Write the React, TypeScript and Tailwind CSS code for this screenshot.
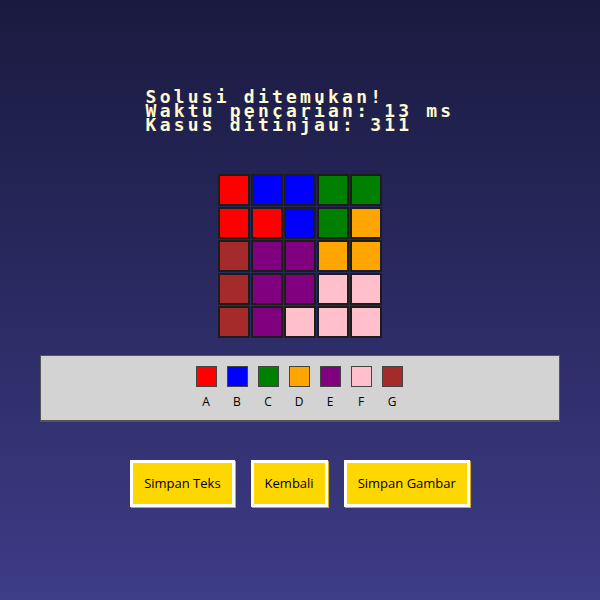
const grid = [
  ['#ff0000', '#0000ff', '#0000ff', '#008000', '#008000'],
  ['#ff0000', '#ff0000', '#0000ff', '#008000', '#ffa500'],
  ['#a52a2a', '#800080', '#800080', '#ffa500', '#ffa500'],
  ['#a52a2a', '#800080', '#800080', '#ffc0cb', '#ffc0cb'],
  ['#a52a2a', '#800080', '#ffc0cb', '#ffc0cb', '#ffc0cb'],
]

const legend = [
  { label: 'A', color: '#ff0000' },
  { label: 'B', color: '#0000ff' },
  { label: 'C', color: '#008000' },
  { label: 'D', color: '#ffa500' },
  { label: 'E', color: '#800080' },
  { label: 'F', color: '#ffc0cb' },
  { label: 'G', color: '#a52a2a' },
]

const buttons = ['Simpan Teks', 'Kembali', 'Simpan Gambar']

export default function App() {
  return (
    <div className="w-[600px] h-[600px] bg-gradient-to-b from-[#1a1a40] to-[#3d3c87] flex flex-col items-center">
      {/* info hasil */}
      <div className="mt-[90px] text-[#fffad0] font-['DejaVu_Sans_Mono',monospace] font-bold text-[18px] leading-[14px] tracking-[3.2px] whitespace-pre">
        <div>Solusi ditemukan!</div>
        <div>Waktu pencarian: 13 ms</div>
        <div>Kasus ditinjau: 311</div>
      </div>

      {/* papan */}
      <div className="mt-[42px] grid grid-cols-5 gap-[1px]">
        {grid.flat().map((c, i) => (
          <div
            key={i}
            className="w-[32px] h-[32px] border-2 border-[#1c1c1c]"
            style={{ backgroundColor: c }}
          />
        ))}
      </div>

      {/* legenda */}
      <div className="mt-[17px] w-[520px] h-[67px] bg-[#d3d3d3] border border-[#555] border-b-2 flex justify-center items-start pt-[10px] pr-[2px] gap-[10px]">
        {legend.map((l) => (
          <div key={l.label} className="flex flex-col items-center w-[21px]">
            <div className="w-[21px] h-[21px] border border-[#444]" style={{ backgroundColor: l.color }} />
            <span className="mt-[8px] text-[12px] leading-[14px] text-black font-['Open_Sans',sans-serif]">{l.label}</span>
          </div>
        ))}
      </div>

      {/* tombol */}
      <div className="mt-[38px] flex gap-[16px]">
        {buttons.map((b) => (
          <button
            key={b}
            className="h-[47px] px-[11px] bg-[#ffd700] border-[3px] border-white text-black text-[13px] font-['Open_Sans',sans-serif] shadow-[1px_1px_0_#d4b000]"
          >
            {b}
          </button>
        ))}
      </div>
    </div>
  )
}
